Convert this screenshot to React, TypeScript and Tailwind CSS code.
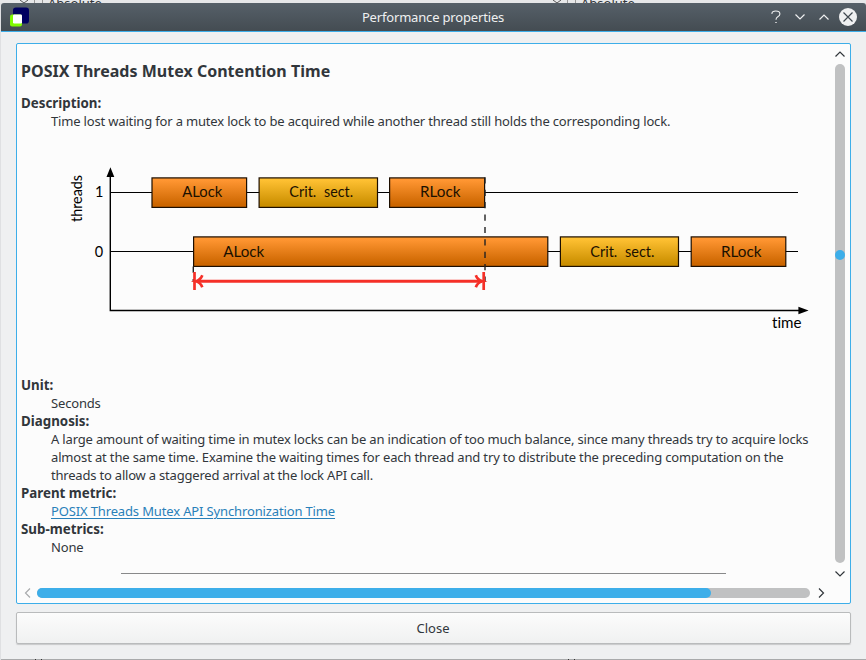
import type { ReactNode } from "react";

type BlockProps = {
  x: number;
  y: number;
  w: number;
  ty: number;
  words: [string, number, number][];
  tone: "orange" | "gold";
};

function Block({ x, y, w, ty, words, tone }: BlockProps) {
  return (
    <g>
      <rect x={x} y={y} width={w} height={29.5} fill={`url(#${tone})`} stroke="#1c0e00" strokeWidth={1.2} />
      {words.map(([word, tx, tw]) => (
        <text key={word} x={tx} y={ty} textLength={tw} lengthAdjust="spacingAndGlyphs" fill="#1a1000">
          {word}
        </text>
      ))}
    </g>
  );
}

function Diagram() {
  return (
    <svg
      viewBox="51 130 770 246"
      width={770}
      height={246}
      className="block shrink-0 font-[Lato,'Liberation_Sans',sans-serif] text-[14.5px] tracking-normal [font-variant-ligatures:none]"
    >
      <defs>
        <linearGradient id="orange" x1="0" y1="0" x2="0" y2="1">
          <stop offset="0.08" stopColor="#ff9632" />
          <stop offset="0.9" stopColor="#cc6600" />
        </linearGradient>
        <linearGradient id="gold" x1="0" y1="0" x2="0" y2="1">
          <stop offset="0.08" stopColor="#fec032" />
          <stop offset="0.9" stopColor="#cb8f00" />
        </linearGradient>
      </defs>
      <g stroke="#000" strokeWidth={1} fill="none">
        <path d="M110 192.5H798M110 251.5H798" />
        <path d="M110.3 175V310.5H800" strokeWidth={1.4} />
      </g>
      <path d="M110.4 167.3L114.3 177H106.5ZM808.6 310.5L798.4 314.2V306.8Z" />
      <Block x={152} y={177.9} w={94.6} ty={197} words={[["ALock", 182.3, 40]]} tone="orange" />
      <Block x={259.1} y={177.9} w={118.4} ty={197} words={[["Crit.", 289.3, 27], ["sect.", 324, 29]]} tone="gold" />
      <Block x={389.6} y={177.9} w={95} ty={197} words={[["RLock", 420, 40.5]]} tone="orange" />
      <Block x={193.6} y={236.9} w={354.2} ty={257} words={[["ALock", 223.3, 41]]} tone="orange" />
      <Block x={560.4} y={236.9} w={118.1} ty={257} words={[["Crit.", 590.3, 27], ["sect.", 625, 29.5]]} tone="gold" />
      <Block x={691.2} y={236.9} w={94.6} ty={257} words={[["RLock", 721, 40.5]]} tone="orange" />
      <g stroke="#222" strokeWidth={1.4}>
        <path d="M485 177.3V282" strokeDasharray="6.2 6.2" />
        <path d="M193.3 266.5V282" strokeDasharray="6.2 6.2" />
      </g>
      <g stroke="#f53028" fill="none">
        <path d="M197 281.2H482" strokeWidth={3} />
        <path d="M194.5 272V290M483.7 272V290" strokeWidth={2.7} />
        <path
          d="M202.3 275.2Q200.5 280 196 281.2Q200.5 282.4 202.3 287.2M475.8 275.2Q477.6 280 482.2 281.2Q477.6 282.4 475.8 287.2"
          strokeWidth={2.7}
        />
      </g>
      <g lengthAdjust="spacingAndGlyphs">
        <text x={95} y={197} textLength={7.5}>1</text>
        <text x={94.8} y={256.5} textLength={8}>0</text>
        <text x={772} y={328.3} textLength={29.5} lengthAdjust="spacingAndGlyphs">time</text>
        <text transform="translate(82 222) rotate(-90)" textLength={47} lengthAdjust="spacingAndGlyphs">threads</text>
      </g>
    </svg>
  );
}

function Chevron({ d, className }: { d: string; className: string }) {
  return (
    <svg viewBox="0 0 12 12" width={12} height={12} className={`block shrink-0 fill-none ${className}`} strokeWidth={1.2}>
      <path d={d} />
    </svg>
  );
}

const UP = "M1.5 8.5L6 4L10.5 8.5";
const DOWN = "M1.5 3.5L6 8L10.5 3.5";
const LEFT = "M8 1.5L3.5 6L8 10.5";
const RIGHT = "M4 1.5L8.5 6L4 10.5";

function Term({ children }: { children: ReactNode }) {
  return <dt className="text-[13.33px] font-bold">{children}</dt>;
}

function Detail({ children }: { children: ReactNode }) {
  return <dd className="pl-[30px] tracking-[-0.17px]">{children}</dd>;
}

export default function App() {
  return (
    <div className="relative h-[660px] w-[866px] overflow-hidden bg-[#dfe0e2] pt-[3px] pl-px font-['Noto_Sans',sans-serif] text-[13px] leading-[18px] text-[#31363b]">
      <div className="absolute top-0 left-0 h-[3px] w-full overflow-hidden bg-[#e6e7e9]">
        <span className="absolute -top-[6px] left-[48px]">Absolute</span>
        <span className="absolute -top-[6px] left-[581px]">Absolute</span>
        <svg className="absolute top-0 left-0" width="866" height="3" fill="none" stroke="#555">
          <path d="M20 0L24 3L28 0M553 0L557 3L561 0" />
          <path d="M34.5 0V3M42.5 0V3M567.5 0V3M575.5 0V3" stroke="#999" />
        </svg>
      </div>

      <section className="flex h-[656px] w-[865px] flex-col rounded-t-[3px] bg-[#eff0f1]">
        <header className="flex h-[29px] shrink-0 items-center rounded-t-[3px] border-b border-[#3daee9] bg-linear-to-b from-[#566069] to-[#444c52] pr-[9px] pl-[9px] text-[#eff0f1]">
          <div className="w-[110px]">
            <svg viewBox="0 0 20 20" width={20} height={20} className="block">
              <rect x="3" y="0.5" width="16" height="16" rx="2.8" fill="#000060" />
              <rect x="0" y="7.5" width="12" height="12" rx="2" fill="#80fa00" />
              <rect x="3" y="7.5" width="9" height="9" rx="1.2" fill="#fff" />
            </svg>
          </div>
          <h1 className="flex-1 pr-px text-center tracking-[-0.17px]">Performance properties</h1>
          <div className="flex w-[110px] items-center justify-end gap-3">
            <svg viewBox="0 0 12 14" width={12} height={14} fill="none" stroke="#eff0f1" strokeWidth={1.1}>
              <path d="M1.8 3.8Q2.2 1 5.8 1Q9.9 1 9.9 4Q9.9 5.6 7.8 6.8Q6 7.8 6 9.8" />
              <path d="M5.3 12.5H6.7" />
            </svg>
            <Chevron d={DOWN} className="stroke-[#eff0f1]" />
            <Chevron d={UP} className="stroke-[#eff0f1]" />
            <svg viewBox="0 0 18 18" width={18} height={18} className="-ml-[3px] block">
              <circle cx="9" cy="9" r="9" fill="#eff0f1" />
              <path d="M4.5 4.5L13.5 13.5M13.5 4.5L4.5 13.5" stroke="#3f484f" strokeWidth="1.2" />
            </svg>
          </div>
        </header>

        <main className="mt-[11px] ml-[15px] flex h-[561px] w-[835px] shrink-0 flex-col rounded-[2px] border border-[#3daee9] bg-[#fcfcfc]">
          <div className="flex h-[536px] shrink-0">
            <article className="w-[813px] shrink-0 overflow-hidden pt-[16px] pl-1">
              <h2 className="mb-[12px] h-[22px] text-[16px] leading-[22px] font-bold tracking-[0.02px]">
                POSIX Threads Mutex Contention Time
              </h2>
              <dl className="whitespace-nowrap">
                <Term>Description:</Term>
                <Detail>
                  Time lost waiting for a mutex lock to be acquired while another thread still holds the corresponding lock.
                  <Diagram />
                </Detail>
                <Term>Unit:</Term>
                <Detail>Seconds</Detail>
                <Term>Diagnosis:</Term>
                <Detail>
                  A large amount of waiting time in mutex locks can be an indication of too much balance, since many threads try to acquire locks
                  <br />
                  <span className="tracking-[-0.15px]">
                    almost at the same time. Examine the waiting times for each thread and try to distribute the preceding computation on the
                  </span>
                  <br />
                  <span className="tracking-[-0.2px]">threads to allow a staggered arrival at the lock API call.</span>
                </Detail>
                <Term>Parent metric:</Term>
                <Detail>
                  <a className="tracking-[-0.14px] text-[#2980b9] underline decoration-1 underline-offset-2">POSIX Threads Mutex API Synchronization Time</a>
                </Detail>
                <Term>Sub-metrics:</Term>
                <Detail>None</Detail>
              </dl>
              <hr className="mt-[17px] ml-[100px] w-[605px] border-[#88898a]" />
            </article>
            <div className="flex w-5 flex-col items-center pt-[4px]">
              <Chevron d={UP} className="stroke-[#31363b]" />
              <div className="mt-[4px] mb-[5px] flex h-[499px] w-[10px] shrink-0 flex-col items-center rounded-full bg-[#c0c1c2] pt-[186px]">
                <div className="h-[10px] w-[10px] rounded-full bg-[#3daee9]" />
              </div>
              <Chevron d={DOWN} className="stroke-[#31363b]" />
            </div>
          </div>
          <div className="flex h-[23px] items-center pt-[3px] pl-[4.5px]">
            <Chevron d={LEFT} className="stroke-[#a9abad]" />
            <div className="mr-[4.5px] ml-[3.5px] h-[10px] w-[773px] rounded-full bg-[#c0c1c2]">
              <div className="h-full w-[674px] rounded-full bg-[#3daee9]" />
            </div>
            <Chevron d={RIGHT} className="stroke-[#31363b]" />
          </div>
        </main>

        <button className="mt-[8px] ml-[15px] h-[32px] w-[835px] shrink-0 rounded-[2px] border border-[#b9bbbc] bg-linear-to-b from-[#fcfcfc] to-[#f0f1f1] pr-px shadow-[0_1px_1px_#c8c9ca]">
          Close
        </button>
      </section>
      <div className="flex h-px bg-[#a9aaab] pl-[34px]">
        <i className="mr-[5px] w-px bg-[#333]" />
        <i className="mr-[526px] w-px bg-[#333]" />
        <i className="mr-[5px] w-px bg-[#333]" />
        <i className="w-px bg-[#333]" />
      </div>
    </div>
  );
}
